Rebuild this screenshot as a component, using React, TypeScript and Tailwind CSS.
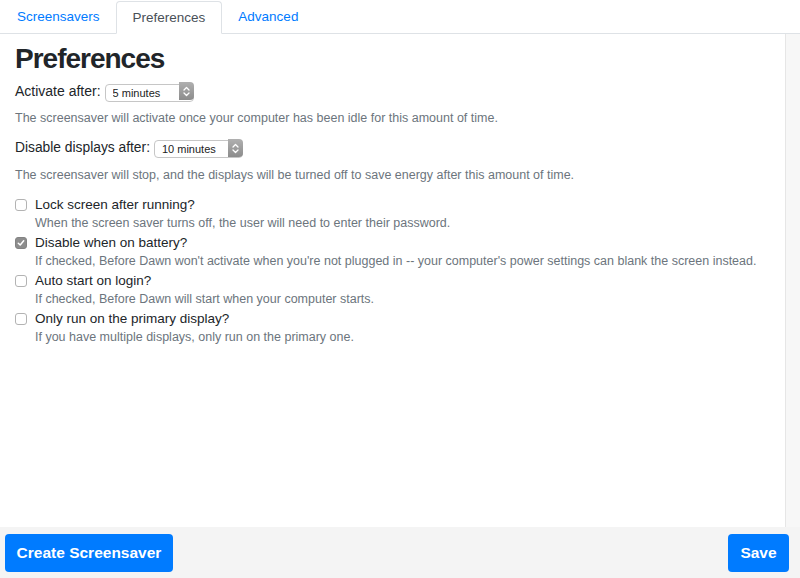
import { useState } from "react";

const font = "font-['Liberation_Sans',Arial,sans-serif]";

interface Option {
    key: string,
    label: string,
    help: string,
    checked: boolean
}

const initialOptions: Option[] = [
    { key: 'lock', label: 'Lock screen after running?', help: 'When the screen saver turns off, the user will need to enter their password.', checked: false },
    { key: 'battery', label: 'Disable when on battery?', help: "If checked, Before Dawn won't activate when you're not plugged in -- your computer's power settings can blank the screen instead.", checked: true },
    { key: 'auto', label: 'Auto start on login?', help: 'If checked, Before Dawn will start when your computer starts.', checked: false },
    { key: 'primary', label: 'Only run on the primary display?', help: 'If you have multiple displays, only run on the primary one.', checked: false },
];

const Stepper = () => (
    <span className="absolute right-0 top-0 bottom-0 w-[15px] rounded-r-[4px] bg-gradient-to-b from-[#b0b0b0] to-[#8c8c8c] flex items-center justify-center pointer-events-none">
        <svg width="7" height="11" viewBox="0 0 7 11" fill="none" stroke="white" strokeWidth="1.3" strokeLinecap="round" strokeLinejoin="round">
            <path d="M1 4 L3.5 1.5 L6 4" />
            <path d="M1 7 L3.5 9.5 L6 7" />
        </svg>
    </span>
);

const MacSelect = ({ value, options }: { value: string, options: string[] }) => {
    const [current, setCurrent] = useState(value);
    return (
        <span className="relative inline-block w-[89px] h-[18px]">
            <select value={current} onChange={e => setCurrent(e.target.value)}
                className="appearance-none w-full h-full border border-[#c6c6c6] rounded-[4px] bg-white pl-[7px] text-[11px] leading-[16px] text-[#222] outline-none">
                {options.map(o => <option key={o}>{o}</option>)}
            </select>
            <Stepper />
        </span>
    );
};

const CheckBox = ({ checked, onClick }: { checked: boolean, onClick: () => void }) => (
    <span onClick={onClick}
        className={`w-[12px] h-[12px] mt-[3px] shrink-0 rounded-[3px] flex items-center justify-center cursor-pointer ${checked ? 'bg-[#8d8d8d] border border-[#838383]' : 'bg-white border border-[#b3b3b3]'}`}>
        {checked &&
            <svg width="8" height="8" viewBox="0 0 8 8" fill="none" stroke="white" strokeWidth="1.5" strokeLinecap="round" strokeLinejoin="round">
                <path d="M1.3 4.2 L3.2 6 L6.7 1.8" />
            </svg>}
    </span>
);

const App = () => {
    const [options, setOptions] = useState<Option[]>(initialOptions);
    const minutes = ['1 minute', '5 minutes', '10 minutes', '15 minutes', '30 minutes', '1 hour', 'Never'];
    const tabClass = "px-4 pt-[2px] h-[33px] flex items-center text-[13.5px] text-[#007bff]";
    const help = "text-[12.5px] leading-[16px] text-[#6c757d]";

    const toggle = (key: string) =>
        setOptions(prev => prev.map(o => o.key === key ? { ...o, checked: !o.checked } : o));

    return (
        <div className={`${font} w-[800px] h-[578px] flex flex-col bg-white text-[#212529] overflow-hidden`}>
            <nav className="h-[34px] flex items-end pl-px border-b border-[#dee2e6] shrink-0">
                <a className={tabClass}>Screensavers</a>
                <a className="px-4 pt-[2px] h-[33px] mb-[-1px] flex items-center text-[13.5px] text-[#495057] bg-white border border-[#dee2e6] border-b-white rounded-t-[4px]">Preferences</a>
                <a className={tabClass}>Advanced</a>
            </nav>

            <div className="flex-1 flex min-h-0">
                <div className="flex-1 pl-[15px]">
                    <h2 className="mt-[8px] h-[34px] leading-[34px] text-[28px] font-bold tracking-[-1px]">Preferences</h2>

                    <div className="mt-[6px] flex items-center gap-[4px] h-[18px] text-[14px]">
                        <label>Activate after:</label>
                        <MacSelect value="5 minutes" options={minutes} />
                    </div>
                    <p className={`mt-[10px] ${help}`}>The screensaver will activate once your computer has been idle for this amount of time.</p>

                    <div className="mt-[13px] flex items-center gap-[4px] h-[18px] text-[13.8px]">
                        <label>Disable displays after:</label>
                        <MacSelect value="10 minutes" options={minutes} />
                    </div>
                    <p className={`mt-[10px] ${help}`}>The screensaver will stop, and the displays will be turned off to save energy after this amount of time.</p>

                    <div className="mt-[13px] flex flex-col gap-[3px]">
                        {options.map(o => (
                            <div key={o.key} className="flex gap-[8px]">
                                <CheckBox checked={o.checked} onClick={() => toggle(o.key)} />
                                <div>
                                    <div className="text-[13.5px] leading-[18px]">{o.label}</div>
                                    <div className={`mt-px ${help}`}>{o.help}</div>
                                </div>
                            </div>
                        ))}
                    </div>
                </div>
                <div className="w-[15px] shrink-0 bg-[#f7f7f7] border-l border-[#e6e6e6]"></div>
            </div>

            <footer className="h-[51px] shrink-0 bg-[#f4f4f4] flex items-center justify-between pl-[5px] pr-[11px]">
                <button className="h-[38px] w-[168px] rounded-[4px] bg-[#007bff] text-white text-[15.5px] font-bold">Create Screensaver</button>
                <button className="h-[38px] w-[61px] rounded-[4px] bg-[#007bff] text-white text-[15.5px] font-bold">Save</button>
            </footer>
        </div>
    );
};

export default App;
